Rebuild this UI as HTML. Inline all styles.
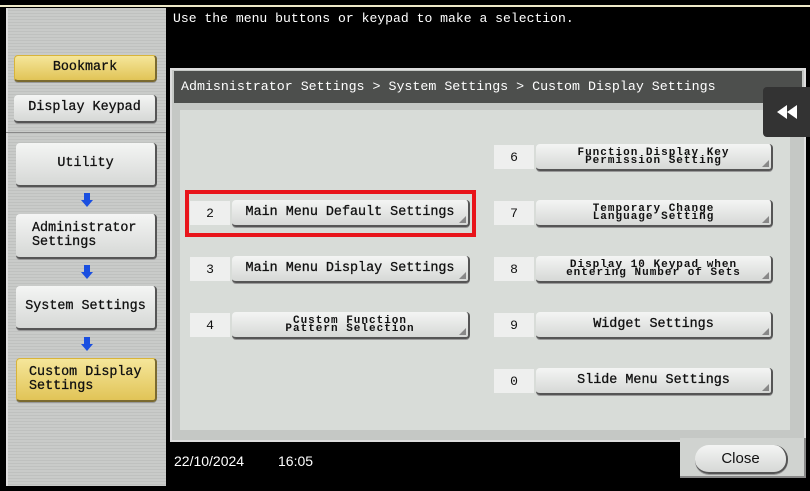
<!DOCTYPE html><html><head><style>
*{margin:0;padding:0;box-sizing:border-box}
body{width:810px;height:491px;background:#000;position:relative;overflow:hidden;font-family:"Liberation Mono",monospace;color:#111}
.a{position:absolute}
.lp{left:6px;top:8px;width:160px;height:478px;background:repeating-linear-gradient(#c9cbc9 0 2px,#bfc1bf 2px 3px);border-left:2px solid #ddd}
.btn{position:absolute;background:linear-gradient(#f4f5f4,#d6d8d6);border-radius:4px;border-right:2px solid #555;border-bottom:2px solid #555;box-shadow:0 1px 0 #999;font-size:13.4px;display:flex;align-items:center;justify-content:center;text-align:center;line-height:14px;-webkit-text-stroke:0.3px #111}
.y{background:linear-gradient(#f5e69a,#e1c457);border:1px solid #d8b43a;border-right:2px solid #7a6a30;border-bottom:2px solid #7a6a30}
.num{position:absolute;width:40px;height:24px;background:#eeefee;font-size:13px;display:flex;align-items:center;justify-content:center}
.ob{height:27px}
.sm{font-size:11px;line-height:8px;letter-spacing:1px;font-weight:bold;-webkit-text-stroke:0}
.arr{position:absolute;width:0;height:0;border-left:6px solid transparent;border-right:6px solid transparent;border-top:7px solid #1a4fe0}
.arr:before{content:"";position:absolute;left:-3px;top:-14px;width:6px;height:7px;background:#1a4fe0}
.tri:after{content:"";position:absolute;right:2px;bottom:2px;border-left:7px solid transparent;border-bottom:7px solid #888}
</style></head><body>
<div class="a" style="left:0;top:5px;width:810px;height:2px;background:#eee9c8"></div>
<div class="a lp"></div>
<div class="a" style="left:6px;top:132px;width:160px;height:1px;background:#888"></div>
<div class="btn y" style="left:14px;top:55px;width:143px;height:27px">Bookmark</div>
<div class="btn" style="left:14px;top:95px;width:143px;height:28px">Display Keypad</div>
<div class="btn" style="left:16px;top:143px;width:141px;height:44px">Utility</div>
<div class="arr" style="left:81px;top:200px"></div>
<div class="btn" style="left:16px;top:214px;width:141px;height:45px;justify-content:flex-start;padding-left:16px;text-align:left">Administrator<br>Settings</div>
<div class="arr" style="left:81px;top:272px"></div>
<div class="btn" style="left:16px;top:286px;width:141px;height:44px">System Settings</div>
<div class="arr" style="left:81px;top:344px"></div>
<div class="btn y" style="left:16px;top:358px;width:141px;height:44px;justify-content:flex-start;padding-left:12px;text-align:left">Custom Display<br>Settings</div>
<div class="a" style="left:173px;top:11px;color:#fff;font-size:13.1px">Use the menu buttons or keypad to make a selection.</div>
<div class="a" style="left:170px;top:68px;width:636px;height:374px;background:#c5c8c5;border:2px solid #ddd"></div>
<div class="a" style="left:174px;top:71px;width:628px;height:32px;background:#4d4f4d;color:#fff;font-size:13.3px;padding:8px 0 0 7px">Admisnistrator Settings &gt; System Settings &gt; Custom Display Settings</div>
<div class="a" style="left:180px;top:110px;width:610px;height:320px;background:#d8dcd8"></div>
<div class="a" style="left:763px;top:87px;width:47px;height:50px;background:#333;border-radius:4px 0 0 4px">
<svg width="47" height="50"><path d="M14 25 L24 18 L24 32Z M24 25 L34 18 L34 32Z" fill="#fff"/></svg></div>
<div class="a" style="left:185px;top:190px;width:291px;height:47px;border:4px solid #e8141a"></div>
<div class="num" style="left:190px;top:201px">2</div><div class="btn ob tri" style="left:232px;top:200px;width:238px">Main Menu Default Settings</div>
<div class="num" style="left:190px;top:257px">3</div><div class="btn ob tri" style="left:232px;top:256px;width:238px">Main Menu Display Settings</div>
<div class="num" style="left:190px;top:313px">4</div><div class="btn ob tri sm" style="left:232px;top:312px;width:238px">Custom Function<br>Pattern Selection</div>
<div class="num" style="left:494px;top:145px">6</div><div class="btn ob tri sm" style="left:536px;top:144px;width:237px">Function Display Key<br>Permission Setting</div>
<div class="num" style="left:494px;top:201px">7</div><div class="btn ob tri sm" style="left:536px;top:200px;width:237px">Temporary Change<br>Language Setting</div>
<div class="num" style="left:494px;top:257px">8</div><div class="btn ob tri sm" style="left:536px;top:256px;width:237px">Display 10 Keypad when<br>entering Number of Sets</div>
<div class="num" style="left:494px;top:313px">9</div><div class="btn ob tri" style="left:536px;top:312px;width:237px">Widget Settings</div>
<div class="num" style="left:494px;top:369px">0</div><div class="btn ob tri" style="left:536px;top:368px;width:237px">Slide Menu Settings</div>
<div class="a" style="left:680px;top:438px;width:126px;height:40px;background:#d0d3d0;border-right:2px solid #888;border-bottom:2px solid #888"></div>
<div class="btn" style="left:695px;top:445px;width:93px;height:29px;border-radius:14px;font-family:'Liberation Sans',sans-serif;font-size:15px;-webkit-text-stroke:0">Close</div>
<div class="a" style="left:174px;top:453px;color:#fff;font-family:'Liberation Sans',sans-serif;font-size:14px">22/10/2024</div>
<div class="a" style="left:278px;top:453px;color:#fff;font-family:'Liberation Sans',sans-serif;font-size:14px">16:05</div>
</body></html>
